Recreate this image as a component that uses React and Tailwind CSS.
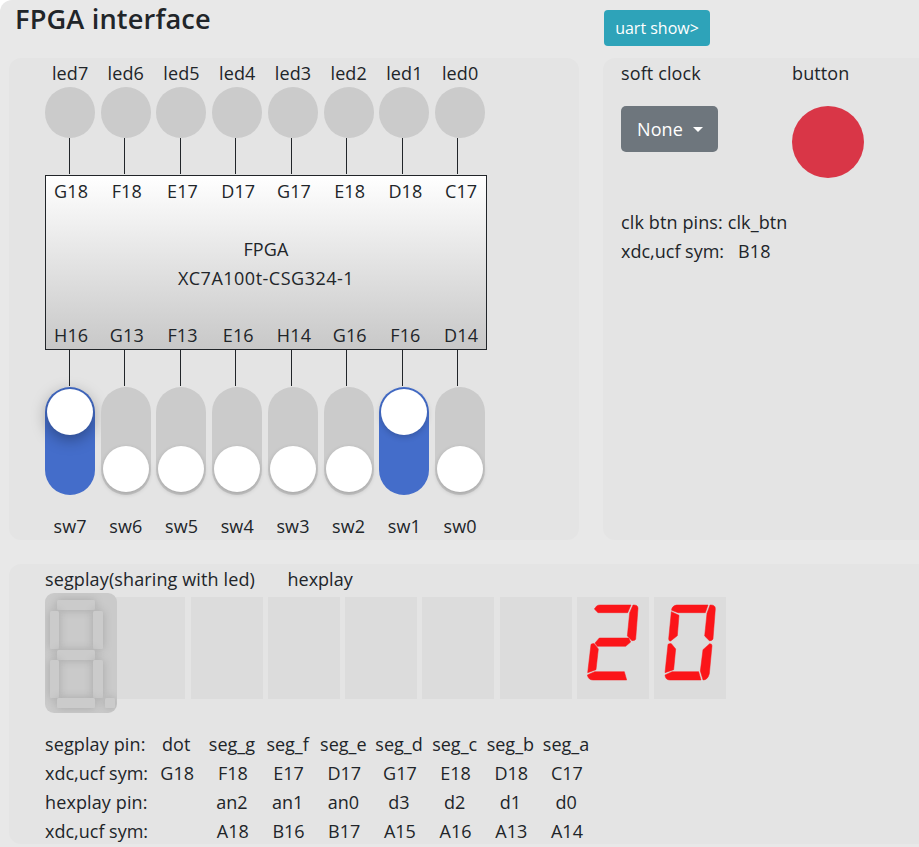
const channels = [
  { id: 7, top: "G18", bottom: "H16", on: true, glow: true },
  { id: 6, top: "F18", bottom: "G13" },
  { id: 5, top: "E17", bottom: "F13" },
  { id: 4, top: "D17", bottom: "E16" },
  { id: 3, top: "G17", bottom: "H14" },
  { id: 2, top: "E18", bottom: "G16" },
  { id: 1, top: "D18", bottom: "F16", on: true },
  { id: 0, top: "C17", bottom: "D14" },
];

const pinRows = [
  { name: "segplay pin:", cells: ["dot", "seg_g", "seg_f", "seg_e", "seg_d", "seg_c", "seg_b", "seg_a"] },
  { name: "xdc,ucf sym:", cells: ["G18", "F18", "E17", "D17", "G17", "E18", "D18", "C17"] },
  { name: "hexplay pin:", cells: ["", "an2", "an1", "an0", "d3", "d2", "d1", "d0"] },
  { name: "xdc,ucf sym:", cells: ["", "A18", "B16", "B17", "A15", "A16", "A13", "A14"] },
];

// Segment outlines in a 216x306 tile
const two = [
  "M52 36 L59 27 Q63 24 69 24 H162 L152 47 H63 Z",
  "M168 24 Q183 23 183 34 L176 127 Q175 131 165 131 L151 117 L158 47 Z",
  "M67 123 H155 L161 135 L146 148 H61 L54 138 Z",
  "M42 142 Q47 139 52 140 L64 156 L57 218 L32 227 Z",
  "M53 224 H142 L149 249 H48 Q34 249 31 234 Z",
];
const zero = [
  "M53 36 Q58 24 68 24 H162 L154 47 H72 L53 40 Z",
  "M52 44 L75 55 L70 116 L50 132 Q44 133 44 126 Z",
  "M168 24 Q184 23 184 35 L177 125 Q176 131 166 131 L152 117 L159 49 Z",
  "M42 142 Q47 139 52 140 L65 156 L59 218 L33 227 Z",
  "M54 224 H134 L141 249 H48 Q34 249 33 234 Z",
  "M167 140 Q174 140 174 146 L166 230 Q161 249 147 249 L139 222 L147 158 Z",
];
const tiles = [null, null, null, null, null, null, two, zero];

function Leads() {
  return (
    <div className="ml-[23.8px] flex h-[37px]">
      {channels.map((c) => (
        <div key={c.id} className="w-[55.5px] shrink-0">
          <div className="h-9 w-px bg-[#212529]" />
        </div>
      ))}
    </div>
  );
}

function Labels({ items }) {
  return (
    <div className="flex h-[29px]">
      {items.map((t) => (
        <div key={t} className="flex w-[55.72px] shrink-0">
          <span className="w-[50.2px] text-center">{t}</span>
        </div>
      ))}
    </div>
  );
}

function Switch({ on, glow }) {
  return (
    <div
      className={
        "flex h-[108px] w-[50px] justify-center rounded-full py-[2px] " +
        (on ? "items-start bg-[#446dca]" : "items-end bg-[#cbcbcb] pb-[3px]")
      }
    >
      <div
        className={
          "size-[46px] rounded-full bg-white " +
          (glow
            ? "shadow-[0_4px_16px_rgba(0,0,0,0.36)]"
            : on
              ? "shadow-[0_2px_6px_rgba(0,0,0,0.2)]"
              : "shadow-[0_2px_5px_rgba(0,0,0,0.2)]")
        }
      />
    </div>
  );
}

function SegDisplay() {
  const seg = "[filter:drop-shadow(0_0_4px_rgba(0,0,0,0.17))]";
  const rects = [
    [12, 7, 38, 10],
    [5, 18, 9, 38],
    [48, 18, 10, 38],
    [12, 57, 38, 10],
    [5, 67, 9, 38],
    [48, 67, 10, 38],
    [12, 105, 38, 10],
    [60, 105, 10, 10],
  ];
  return (
    <svg viewBox="0 0 72 120" className="relative z-10 h-[120px] w-[72px] shrink-0 rounded-[9px] bg-[#cacaca]">
      {rects.map(([x, y, w, h]) => (
        <rect key={x + "-" + y} x={x} y={y} width={w} height={h} rx="1.5" fill="#cbcbcb" className={seg} />
      ))}
    </svg>
  );
}

export default function App() {
  return (
    <div className="h-[847px] w-[919px] overflow-hidden bg-white font-['Open_Sans','Noto_Sans',sans-serif] text-[18px] leading-[29px] tracking-[0.12px] text-[#212529]">
      <div className="flex h-full flex-col rounded-tl-[12px] bg-[#e8e8e8] pl-[9px]">
        <header className="flex h-[58px] shrink-0">
          <h1 className="w-[595px] pl-[6px] pt-[2px] text-[27.2px] font-[550] leading-[34px] tracking-[0.15px]">
            FPGA interface
          </h1>
          <button className="mt-[10px] flex h-9 w-[106px] items-center justify-center rounded-[4px] bg-[#2ea3b9] text-[16px] tracking-[0px] text-white">
            uart show&gt;
          </button>
        </header>

        <div className="flex h-[482px] shrink-0 gap-6">
          <section className="w-[570px] shrink-0 rounded-[12px] bg-[#e4e4e4] pl-9 pt-px">
            <Labels items={channels.map((c) => "led" + c.id)} />
            <div className="flex h-[50px]">
              {channels.map((c) => (
                <div key={c.id} className="w-[55.72px] shrink-0">
                  <div className="-mt-px h-[51px] w-[50px] rounded-full bg-[#cbcbcb]" />
                </div>
              ))}
            </div>
            <Leads />
            <div className="flex h-[175px] w-[442px] flex-col border border-[#212529] bg-gradient-to-b from-white to-[#c8c8c8] pt-px">
              <Labels items={channels.map((c) => c.top)} />
              <div className="flex h-[115px] shrink-0 flex-col items-center justify-center">
                <span>FPGA</span>
                <span className="tracking-[0.5px]">XC7A100t-CSG324-1</span>
              </div>
              <Labels items={channels.map((c) => c.bottom)} />
            </div>
            <Leads />
            <div className="flex h-[125px]">
              {channels.map((c) => (
                <div key={c.id} className="w-[55.72px] shrink-0">
                  <Switch on={c.on} glow={c.glow} />
                </div>
              ))}
            </div>
            <Labels items={channels.map((c) => "sw" + c.id)} />
          </section>

          <section className="grow rounded-l-[12px] bg-[#e4e4e4] pl-[18px] pt-px">
            <div className="flex h-[149px]">
              <div className="w-[171px]">
                <div className="mb-[18px] tracking-[0.12px]">soft clock</div>
                <button className="flex h-[46px] w-[97px] items-center rounded-[5px] bg-[#6e767d] pl-4 pt-px text-[18px] text-white">
                  None
                  <span className="ml-[10px] border-x-[5px] border-t-[5px] border-x-transparent border-t-white" />
                </button>
              </div>
              <div>
                <div className="mb-[18px]">button</div>
                <div className="size-[72px] rounded-full bg-[#d93647]" />
              </div>
            </div>
            <div>clk btn pins: clk_btn</div>
            <div className="flex">
              <span className="w-[117px] tracking-[0px]">xdc,ucf sym:</span>
              <span>B18</span>
            </div>
          </section>
        </div>

        <section className="mt-6 h-[280px] shrink-0 rounded-l-[12px] bg-[#e4e4e4] pl-9 pt-px">
          <div className="flex h-7">
            <span className="w-[242.5px]">segplay(sharing with led)</span>
            <span className="tracking-[0px]">hexplay</span>
          </div>
          <div className="flex h-[137px] items-start">
            <SegDisplay />
            <div className="-ml-[3.6px] mt-1 flex gap-[5.22px]">
              {tiles.map((paths, i) => (
                <div key={i} className="h-[102px] w-[72px] shrink-0 bg-[#dcdcdc]">
                  {paths && (
                    <svg viewBox="0 0 216 306" className="size-full" fill="#fb1519" stroke="#fb1519" strokeWidth="1.5">
                      {paths.map((d) => (
                        <path key={d} d={d} />
                      ))}
                    </svg>
                  )}
                </div>
              ))}
            </div>
          </div>
          {pinRows.map((row, r) => (
            <div key={r} className="flex tracking-[0px]">
              <span className={r % 2 ? "w-[104.3px] shrink-0" : "w-[103.4px] shrink-0 tracking-[0.12px]"}>
                {row.name}
              </span>
              {row.cells.map((cell, i) => (
                <span key={i} className="flex w-[55.7px] shrink-0 justify-center">
                  {cell}
                </span>
              ))}
            </div>
          ))}
        </section>
      </div>
    </div>
  );
}
